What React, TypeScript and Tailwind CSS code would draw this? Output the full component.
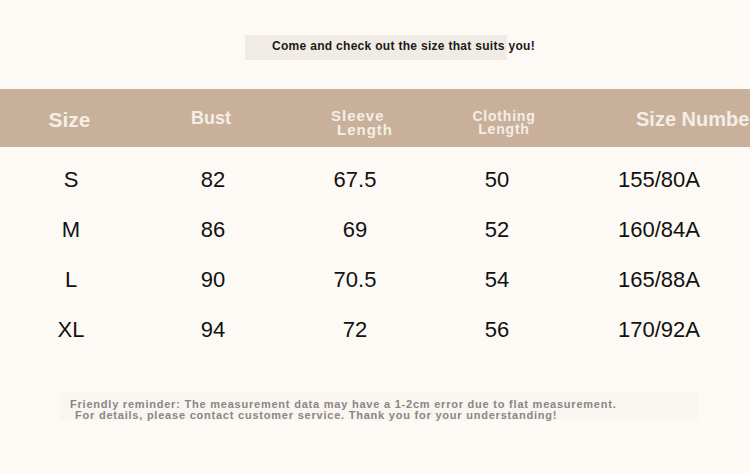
const rows = [
  ["S", "82", "67.5", "50", "155/80A"],
  ["M", "86", "69", "52", "160/84A"],
  ["L", "90", "70.5", "54", "165/88A"],
  ["XL", "94", "72", "56", "170/92A"],
];

export default function App() {
  return (
    <div className="w-[750px] h-[473px] overflow-hidden bg-[#fdf9f5] font-['Liberation_Sans',Arial,sans-serif]">
      {/* title */}
      <div className="pt-[35px]">
        <div className="ml-[245px] w-[262px] h-[25px] bg-[#f1ebe6] overflow-visible">
          <div className="pl-[27px] pt-[6px] whitespace-nowrap text-[12px] leading-[11px] font-bold tracking-[0.3px] text-[#1a1a1a]">
            Come and check out the size that suits you!
          </div>
        </div>
      </div>

      {/* header band */}
      <div className="mt-[29px] h-[58px] bg-[#c9b09a] grid grid-cols-[142px_142px_142px_142px_1fr] text-[#f4eee7] font-bold overflow-hidden">
        <div className="flex justify-center pt-[20px]">
          <span className="text-[21px] leading-none -ml-[3px]">Size</span>
        </div>
        <div className="flex justify-center pt-[20px]">
          <span className="text-[18px] leading-none -ml-[4px]">Bust</span>
        </div>
        <div className="pt-[20px] pl-[47px] text-[15px] leading-[14px] tracking-[1px]">
          <div>Sleeve</div>
          <div className="pl-[6px]">Length</div>
        </div>
        <div className="pt-[21px] pl-[14px] text-center text-[14px] leading-[13px] tracking-[0.8px]">
          <div>Clothing</div>
          <div>Length</div>
        </div>
        <div className="pt-[20px] pl-[68px] whitespace-nowrap">
          <span className="text-[20px] leading-none">Size Number</span>
        </div>
      </div>

      {/* data rows */}
      <div className="pt-[8px]">
        {rows.map((r) => (
          <div key={r[0]} className="grid grid-cols-[142px_142px_142px_142px_1fr] h-[50px] text-[22px] leading-[50px] text-[#111]">
            {r.map((c, i) => (
              <div key={i} className="text-center">
                {c}
              </div>
            ))}
          </div>
        ))}
      </div>

      {/* reminder */}
      <div className="mt-[37px] ml-[60px] w-[638px] h-[28px] bg-[#f9f5f1] pt-[7px] pl-[10px] text-[11px] leading-[11px] font-bold text-[#8a8684] tracking-[0.78px] whitespace-nowrap">
        <div>Friendly reminder: The measurement data may have a 1-2cm error due to flat measurement.</div>
        <div className="pl-[5px]">For details, please contact customer service. Thank you for your understanding!</div>
      </div>
    </div>
  );
}
